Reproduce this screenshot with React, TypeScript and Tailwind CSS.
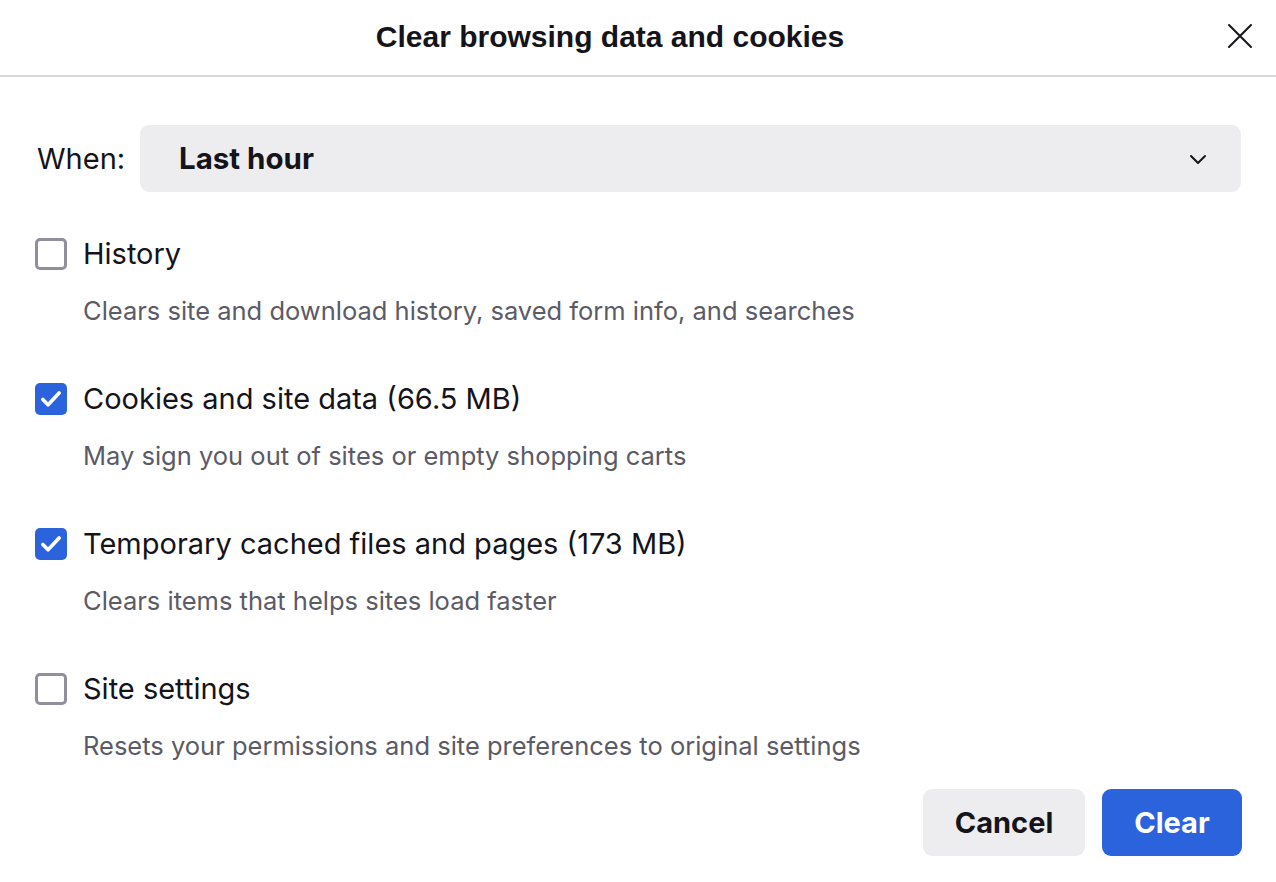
import React, { useState } from 'react';

const items = [
  { id: 'history', label: 'History', desc: 'Clears site and download history, saved form info, and searches', checked: false },
  { id: 'cookies', label: 'Cookies and site data (66.5 MB)', desc: 'May sign you out of sites or empty shopping carts', checked: true },
  { id: 'cache', label: 'Temporary cached files and pages (173 MB)', desc: 'Clears items that helps sites load faster', checked: true },
  { id: 'settings', label: 'Site settings', desc: 'Resets your permissions and site preferences to original settings', checked: false },
];

const Checkbox: React.FC<{ checked: boolean; onToggle: () => void }> = ({ checked, onToggle }) => (
  <button
    onClick={onToggle}
    className={
      checked
        ? 'w-[32px] h-[32px] rounded-[5px] bg-[#2b63dc] flex items-center justify-center shrink-0'
        : 'w-[32px] h-[32px] rounded-[5px] border-[3px] border-[#8f8f9d] bg-white shrink-0'
    }
  >
    {checked && (
      <svg width="26" height="26" viewBox="0 0 24 24" fill="none" stroke="white" strokeWidth={3.4} strokeLinecap="round" strokeLinejoin="round">
        <path d="M4.5 12.5l4.8 4.8L19.5 6.5" />
      </svg>
    )}
  </button>
);

export default function App() {
  const [state, setState] = useState(items.map(i => i.checked));

  return (
    <div className="w-[1276px] h-[882px] bg-white text-[#15141a] flex flex-col" style={{ fontFamily: 'Inter, "Noto Sans", sans-serif' }}>
      {/* Header */}
      <div className="h-[77px] border-b-2 border-[#d8d8dc] flex items-center justify-center relative shrink-0 pr-[56px] pb-[3px]">
        <h1 className="text-[30px] font-bold text-[#15141a]" style={{ fontFamily: '"Liberation Sans", Arial, sans-serif' }}>
          Clear browsing data and cookies
        </h1>
        <button className="absolute right-[22px] top-[22px] w-[28px] h-[28px] flex items-center justify-center">
          <svg width="26" height="26" viewBox="0 0 26 26" fill="none" stroke="#15141a" strokeWidth={2} strokeLinecap="round">
            <path d="M2 2l22 22M24 2L2 24" />
          </svg>
        </button>
      </div>

      <div className="px-[35px] pt-[48px] flex flex-col">
        {/* When */}
        <div className="flex items-center">
          <span className="text-[29px] w-[105px] pl-[2px]">When:</span>
          <div className="flex-1 h-[67px] bg-[#ededf0] rounded-[9px] flex items-center justify-between pl-[39px] pr-[34px]">
            <span className="text-[29.5px] font-bold">Last hour</span>
            <svg width="18" height="18" viewBox="0 0 18 18" fill="none" stroke="#15141a" strokeWidth={2} strokeLinecap="round" strokeLinejoin="round">
              <path d="M2 6l7 7 7-7" />
            </svg>
          </div>
        </div>

        {/* Options */}
        <div className="flex flex-col mt-[29px]">
          {items.map((item, idx) => (
            <div key={item.id} className="flex flex-col h-[145px]">
              <div className="flex items-center gap-[16px] h-[66px]">
                <Checkbox
                  checked={state[idx]}
                  onToggle={() => setState(s => s.map((v, i) => (i === idx ? !v : v)))}
                />
                <span className="text-[29px]">{item.label}</span>
              </div>
              <div className="pl-[48px] text-[25.5px] text-[#5b5b66] leading-[30px] mt-[9px]">{item.desc}</div>
            </div>
          ))}
        </div>
      </div>

      {/* Footer */}
      <div className="flex justify-end gap-[17px] pr-[34px] -mt-[12px]">
        <button className="w-[162px] h-[67px] rounded-[9px] bg-[#ededf0] text-[29px] font-bold text-[#15141a]">Cancel</button>
        <button className="w-[140px] h-[67px] rounded-[9px] bg-[#2b63dc] text-[29px] font-bold text-white">Clear</button>
      </div>
    </div>
  );
}
